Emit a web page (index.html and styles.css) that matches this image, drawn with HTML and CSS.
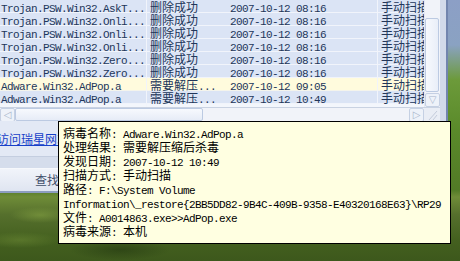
FILE: index.html
```html
<!DOCTYPE html>
<html lang="zh-CN">
<head>
    <meta charset="UTF-8">
    <title>瑞星杀毒 - 查杀结果</title>
    <link rel="stylesheet" href="styles.css">
</head>
<body>
    <div class="window">
        <div class="listview">
            <div class="rows">
                <div class="row"><span class="c1 en">Trojan.PSW.Win32.AskT...</span><span class="c2 zh">删除成功</span><span class="c3 en">2007-10-12 08:16</span><span class="c4 zh">手动扫描</span></div>
                <div class="row"><span class="c1 en">Trojan.PSW.Win32.Onli...</span><span class="c2 zh">删除成功</span><span class="c3 en">2007-10-12 08:16</span><span class="c4 zh">手动扫描</span></div>
                <div class="row"><span class="c1 en">Trojan.PSW.Win32.Onli...</span><span class="c2 zh">删除成功</span><span class="c3 en">2007-10-12 08:16</span><span class="c4 zh">手动扫描</span></div>
                <div class="row"><span class="c1 en">Trojan.PSW.Win32.Onli...</span><span class="c2 zh">删除成功</span><span class="c3 en">2007-10-12 08:16</span><span class="c4 zh">手动扫描</span></div>
                <div class="row"><span class="c1 en">Trojan.PSW.Win32.Zero...</span><span class="c2 zh">删除成功</span><span class="c3 en">2007-10-12 08:16</span><span class="c4 zh">手动扫描</span></div>
                <div class="row"><span class="c1 en">Trojan.PSW.Win32.Zero...</span><span class="c2 zh">删除成功</span><span class="c3 en">2007-10-12 08:16</span><span class="c4 zh">手动扫描</span></div>
                <div class="row hot"><span class="c1 en">Adware.Win32.AdPop.a</span><span class="c2 zh">需要解压<span class="en">...</span></span><span class="c3 en">2007-10-12 09:05</span><span class="c4 zh">手动扫描</span></div>
                <div class="row"><span class="c1 en">Adware.Win32.AdPop.a</span><span class="c2 zh">需要解压<span class="en">...</span></span><span class="c3 en">2007-10-12 10:49</span><span class="c4 zh">手动扫描</span></div>
            </div>
            <div class="vscroll">
                <div class="vtrack"></div>
                <div class="vthumb"></div>
                <div class="sbtn">&#9661;</div>
            </div>
            <div class="hscroll">
                <div class="sbtn">&#9665;</div>
                <div class="hthumb"></div>
                <div class="htrack"></div>
                <div class="sbtn">&#9655;</div>
            </div>
            <div class="grip">
                <svg width="16" height="14" viewBox="0 0 16 14"><path d="M13 3 L5 12 M13 7 L9 12" stroke="#c3cbdb" stroke-width="1" fill="none"/></svg>
            </div>
        </div>
        <div class="panel">
            <div class="panel-links"><a class="link" href="#">访问瑞星网站</a></div>
            <div class="panel-buttons"><span class="btn">查找病毒</span></div>
        </div>
    </div>

    <div class="tooltip">
        <div class="tip-line"><span class="zh">病毒名称</span><span class="en">: Adware.Win32.AdPop.a</span></div>
        <div class="tip-line"><span class="zh">处理结果</span><span class="en">: </span><span class="zh">需要解压缩后杀毒</span></div>
        <div class="tip-line"><span class="zh">发现日期</span><span class="en">: 2007-10-12 10:49</span></div>
        <div class="tip-line"><span class="zh">扫描方式</span><span class="en">: </span><span class="zh">手动扫描</span></div>
        <div class="tip-line"><span class="zh">路径</span><span class="en">: F:\System Volume</span></div>
        <div class="tip-line"><span class="en">Information\_restore{2BB5DD82-9B4C-409B-9358-E40320168E63}\RP29</span></div>
        <div class="tip-line"><span class="zh">文件</span><span class="en">: A0014863.exe&gt;&gt;AdPop.exe</span></div>
        <div class="tip-line"><span class="zh">病毒来源</span><span class="en">: </span><span class="zh">本机</span></div>
    </div>
</body>
</html>
```

FILE: styles.css
```css
body {
    margin: 0;
    width: 460px;
    height: 261px;
    overflow: hidden;
    position: relative;
    font-family: "Noto Sans CJK SC", sans-serif;
    font-size: 12px;
    background:
        radial-gradient(ellipse 30px 8px at 40px 215px, rgba(140, 170, 70, 0.5), transparent),
        radial-gradient(ellipse 50px 10px at 120px 250px, rgba(30, 50, 15, 0.5), transparent),
        radial-gradient(ellipse 40px 8px at 20px 240px, rgba(120, 150, 60, 0.4), transparent),
        linear-gradient(180deg, #8c9fc6 0, #8aa2c2 45px, #6c9a3a 80px, #5a8a2a 130px, #527a26 190px, #6f8c38 197px, #556f2c 215px, #44601f 240px, #3d581c 261px);
}

.zh {
    font-family: "Noto Sans CJK SC", sans-serif;
    font-size: 12px;
}

.en {
    font-family: "Liberation Mono", monospace;
    font-size: 11px;
    letter-spacing: -0.6px;
}

/* ventana principal */
.window {
    width: 440px;
    height: 192px;
    border-right: 6px solid #d2daea;
    box-shadow: 2px 0 0 #7285ae;
    display: flex;
    flex-direction: column;
    background: #e4e9f4;
}

.listview {
    display: grid;
    grid-template-columns: 424px 16px;
    grid-template-rows: 107px 14px;
}

.rows {
    background: #f3f6fc;
    overflow: hidden;
    color: #22365a;
}

.row {
    display: grid;
    grid-template-columns: 146px 80px 151px 1fr;
    align-items: baseline;
    height: 13px;
    line-height: 13px;
    background: linear-gradient(180deg, #dbe4f5 12px, #f1f4fb 12px);
    white-space: nowrap;
}

.row.hot {
    background: linear-gradient(180deg, #fffbdd 12px, #f4f4ec 12px);
}

.c1 {
    padding-left: 1px;
}

.c2, .c3, .c4 {
    padding-left: 4px;
}

.c2, .c4 {
    box-shadow: inset 1px 0 0 #f1f4fb;
}

/* barras de desplazamiento */
.vscroll {
    display: flex;
    flex-direction: column;
    background: #f1f3f9;
    border-left: 1px solid #e2e7f1;
}

.vtrack {
    height: 18px;
}

.vthumb {
    flex: 1;
    margin: 0 1px 1px 0;
    border: 1px solid #bccae2;
    border-radius: 2px;
    background: linear-gradient(90deg, #f7f9fd, #e9eef8);
}

.sbtn {
    height: 12px;
    width: 13px;
    border: 1px solid #c5d0e3;
    border-radius: 2px;
    background: #eef2f9;
    color: #aab6cc;
    font-family: "DejaVu Sans", sans-serif;
    font-size: 10px;
    line-height: 12px;
    text-align: center;
}

.hscroll {
    display: flex;
    background: #f1f3f9;
    border-top: 1px solid #c9d2e2;
}

.hthumb {
    width: 186px;
    border: 1px solid #bccae2;
    border-radius: 2px;
    background: linear-gradient(180deg, #f7f9fd, #e6ecf7);
}

.htrack {
    flex: 1;
}

.grip {
    background: #e9edf5;
    border-top: 1px solid #c9d2e2;
}

.grip svg {
    display: block;
}

/* panel inferior */
.panel {
    flex: 1;
    display: flex;
    flex-direction: column;
}

.panel-links {
    height: 35px;
    display: flex;
    align-items: center;
    background: #e3e9f5;
    border-bottom: 1px solid #c4cee0;
}

.link {
    margin-left: -3px;
    color: #1740c8;
    font-size: 12px;
    line-height: 14px;
}

.panel-buttons {
    flex: 1;
    padding-top: 11px;
    background: #d5ddec;
    border-bottom: 2px solid #8d9dc0;
}

.btn {
    display: block;
    height: 22px;
    line-height: 22px;
    padding-left: 35px;
    border-top: 1px solid #f6f8fc;
    background: linear-gradient(180deg, #f1f4fa, #dfe5f1);
    color: #3f4e6a;
    font-size: 12px;
}

/* tooltip */
.tooltip {
    position: absolute;
    left: 58px;
    top: 121px;
    width: 393px;
    height: 123px;
    box-sizing: border-box;
    padding: 4px 4px 0 4px;
    border: 1px solid #000;
    background: #ffffe1;
    color: #000;
}

.tip-line {
    height: 14px;
    line-height: 14px;
    white-space: nowrap;
}
```
